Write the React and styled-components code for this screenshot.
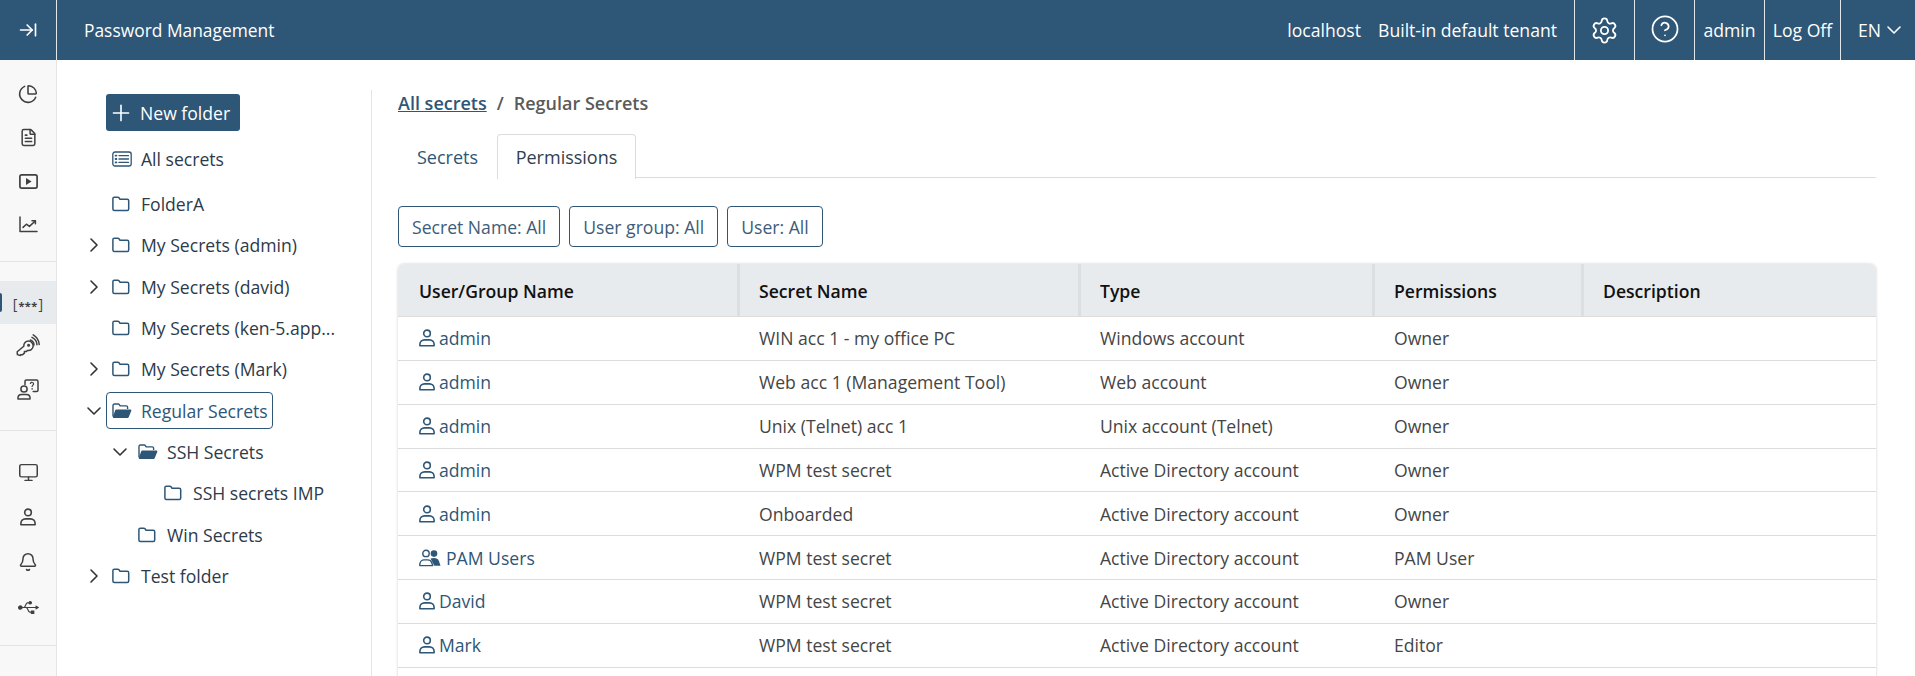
import React from "react";
import styled, { createGlobalStyle } from "styled-components";
import {
  ArrowRightToLine,
  Bell,
  ChartPie,
  ChevronDown,
  ChevronRight,
  CircleHelp,
  FileText,
  Monitor,
  Plus,
  Settings,
} from "lucide-react";
import { FaUsb } from "react-icons/fa";

const NAVY = "#2e5676";

const GlobalStyle = createGlobalStyle`
  html, body {
    margin: 0;
    height: 676px;
    overflow: hidden;
    background: #fff;
    font-family: "Open Sans", "Liberation Sans", sans-serif;
    font-size: 17.6px;
  }
`;

const Page = styled.div`
  height: 676px;
  display: flex;
  flex-direction: column;
  overflow: hidden;
`;

const Header = styled.header`
  height: 60px;
  flex: none;
  display: flex;
  align-items: stretch;
  background: ${NAVY};
  color: #fff;
`;

const HeaderCell = styled.div`
  display: flex;
  align-items: center;
  justify-content: center;
  flex: none;
  box-sizing: border-box;
  width: ${(p) => p.$w}px;
  border-left: 1px solid #dfe6ec;
`;

const Expander = styled(HeaderCell)`
  width: 56px;
  border-left: 0;
  border-right: 1px solid #dfe6ec;
  box-sizing: content-box;
`;

const AppTitle = styled.div`
  display: flex;
  align-items: center;
  padding-left: 27px;
  font-size: 17.4px;
`;

const Tenant = styled.div`
  margin-left: auto;
  display: flex;
  align-items: center;
  gap: 17px;
  padding-right: 17px;
`;

const LangCell = styled(HeaderCell)`
  justify-content: flex-start;
  padding-left: 17px;
  gap: 1px;
`;

const HelpGlyph = styled(CircleHelp)`
  margin-top: -3px;
`;

const Body = styled.div`
  flex: 1;
  min-height: 0;
  display: flex;
`;

const Rail = styled.nav`
  width: 56px;
  flex: none;
  background: #f8f8f8;
  border-right: 1px solid #e5e5e5;
`;

const RailGroup = styled.div`
  padding: ${(p) => p.$pad};
  border-bottom: 1px solid #e3e3e3;
`;

const RailItem = styled.div`
  height: ${(p) => p.$h || 43.7}px;
  display: flex;
  align-items: center;
  justify-content: center;
  position: relative;
  color: #404040;
  background: ${(p) => (p.$active ? "#e8ebee" : "transparent")};
  ${(p) =>
    p.$active &&
    `&::before {
      content: "";
      position: absolute;
      left: 0;
      top: 12px;
      bottom: 12px;
      width: 2px;
      border-radius: 0 2px 2px 0;
      background: ${NAVY};
    }`}
`;

const TreePanel = styled.aside`
  width: 315px;
  flex: none;
  box-sizing: border-box;
  margin-top: 30px;
  padding: 4px 0 0 30px;
  border-right: 1px solid #e5e5e5;
`;

const NewFolder = styled.button`
  display: flex;
  align-items: center;
  gap: 6px;
  height: 37px;
  width: 134px;
  margin-left: 19px;
  margin-bottom: 7px;
  padding: 0 0 0 2px;
  box-sizing: border-box;
  border: 0;
  border-radius: 3px;
  background: ${NAVY};
  color: #fff;
  font: inherit;
  white-space: nowrap;
`;

const TreeRow = styled.div`
  height: 41.35px;
  display: flex;
  align-items: center;
  padding-left: ${(p) => (p.$depth || 0) * 26}px;
  color: #2c3a4a;
  margin-bottom: ${(p) => p.$gap || 0}px;
`;

const Twisty = styled.span`
  width: 14px;
  height: 18px;
  flex: none;
  display: flex;
  align-items: center;
  justify-content: center;
  margin-right: 5px;
  color: #333;
  svg {
    flex: none;
  }
`;

const IconSlot = styled.span`
  width: 20px;
  flex: none;
  display: flex;
  align-items: center;
`;

const TreeLabel = styled.span`
  display: flex;
  align-items: center;
  gap: 9px;
  height: 37px;
  box-sizing: border-box;
  padding: 0 4px 0 5px;
  border: 1px solid ${(p) => (p.$selected ? NAVY : "transparent")};
  border-radius: 4px;
  color: ${(p) => (p.$selected ? NAVY : "inherit")};
  white-space: nowrap;
`;

const Content = styled.main`
  flex: 1;
  min-width: 0;
  padding: 30px 39px 0 26px;
`;

const Crumbs = styled.div`
  height: 27px;
  line-height: 27px;
  font-size: 18px;
  font-weight: 600;
  color: #5a5a5a;
`;

const CrumbLink = styled.a`
  color: ${NAVY};
  text-decoration: underline;
`;

const Sep = styled.span`
  margin: 0 10px;
`;

const Tabs = styled.div`
  height: 44px;
  margin-top: 17px;
  box-sizing: border-box;
  display: flex;
  align-items: stretch;
  border-bottom: 1px solid #dcdcdc;
`;

const Tab = styled.div`
  box-sizing: border-box;
  width: ${(p) => p.$w}px;
  height: 45px;
  display: flex;
  align-items: center;
  justify-content: center;
  font-size: 18px;
  color: ${(p) => (p.$active ? "#2f3f4f" : NAVY)};
  background: #fff;
  ${(p) =>
    p.$active &&
    `border: 1px solid #dcdcdc;
     border-bottom: 0;
     border-radius: 4px 4px 0 0;`}
`;

const Filters = styled.div`
  display: flex;
  gap: 9px;
  margin-top: 28px;
`;

const Filter = styled.button`
  height: 41px;
  padding: 0 13px;
  box-sizing: border-box;
  background: #fff;
  border: 1px solid ${NAVY};
  border-radius: 4px;
  color: #3d5c78;
  font: inherit;
`;

const Table = styled.div`
  margin-top: 17px;
  border-radius: 6px 6px 0 0;
  box-shadow: 0 0 3px rgba(0, 0, 0, 0.2);
`;

const Row = styled.div`
  display: grid;
  grid-template-columns: 339px 341px 294px 209px 1fr;
  height: ${(p) => (p.$head ? 53 : 43.85)}px;
  box-sizing: border-box;
  border-bottom: 1px solid #dcdcdc;
  background: ${(p) => (p.$head ? "#e8ebee" : "#fff")};
  border-radius: ${(p) => (p.$head ? "6px 6px 0 0" : "0")};
`;

const HeadCell = styled.div`
  display: flex;
  align-items: center;
  padding: 2px 0 0 ${(p) => (p.$first ? 21 : 19)}px;
  font-weight: 600;
  color: #111;
  border-left: ${(p) => (p.$first ? "0" : "3px solid #dcdfe2")};
  box-sizing: border-box;
`;

const Cell = styled.div`
  display: flex;
  align-items: center;
  padding-left: 22px;
  color: #454545;
`;

const UserCell = styled(Cell)`
  padding-left: 21px;
  gap: ${(p) => (p.$group ? 5 : 4)}px;
  color: ${NAVY};
`;

const Svg = ({ w = 18, h = 18, view = "0 0 24 24", children, ...rest }) => (
  <svg width={w} height={h} viewBox={view} fill="none" stroke="currentColor" strokeWidth="1.6" strokeLinecap="round" strokeLinejoin="round" {...rest}>
    {children}
  </svg>
);

const FolderIcon = () => (
  <svg width="18" height="16" viewBox="0 0 18 16" fill="none" stroke={NAVY} strokeWidth="1.5" strokeLinejoin="round">
    <path d="M.9 13V2.6c0-.8.6-1.4 1.4-1.4h3.6c.5 0 .8.2 1.1.6l1 1.4h7.2c.9 0 1.5.6 1.5 1.5V13c0 .9-.6 1.5-1.5 1.5H2.4c-.9 0-1.5-.6-1.5-1.5Z" />
  </svg>
);

const FolderOpenIcon = () => (
  <svg width="20" height="16" viewBox="0 0 20 16">
    <path d="M1 13.5V2.4C1 1.6 1.6 1 2.4 1h3.8c.4 0 .8.2 1 .5l1 1.4h6c.8 0 1.4.6 1.4 1.4V6" fill="none" stroke={NAVY} strokeWidth="1.4" />
    <path d="M4.2 6.4h14.2c.7 0 1.2.7.9 1.3l-2.6 6.5c-.2.5-.7.8-1.3.8H1.8c-.7 0-1.1-.7-.9-1.3l2.3-6.5c.2-.5.6-.8 1-.8Z" fill={NAVY} />
  </svg>
);

const ListIcon = () => (
  <svg width="20" height="16" viewBox="0 0 20 16" fill="none" stroke={NAVY} strokeWidth="1.3" strokeLinecap="round">
    <rect x="0.8" y="1" width="18.4" height="14" rx="2.2" />
    <path d="M7 4.6h9.5M7 8h9.5M7 11.4h9.5" />
    <path d="M3.6 4.6h.8M3.6 8h.8M3.6 11.4h.8" strokeWidth="1.8" />
  </svg>
);

const PersonIcon = ({ color = NAVY }) => (
  <svg width="16" height="18" viewBox="0 0 16 18" fill="none" stroke={color} strokeWidth="1.6">
    <circle cx="8" cy="4.4" r="3.3" />
    <path d="M.9 16.8v-1.4c0-2.6 2-4.5 4.6-4.5h5c2.6 0 4.6 1.9 4.6 4.5v1.4Z" strokeLinejoin="round" />
  </svg>
);

const GroupIcon = () => (
  <svg width="22" height="18" viewBox="0 0 22 18">
    <g fill="none" stroke={NAVY} strokeWidth="1.4">
      <circle cx="7" cy="4.4" r="3.2" />
      <path d="M.8 16.6v-1.2c0-2.6 2-4.5 4.5-4.5h3.4c2.2 0 3.4 1 4 2.6l1 3.1Z" strokeLinejoin="round" />
    </g>
    <circle cx="15" cy="4.6" r="3.3" fill={NAVY} />
    <path d="M11.5 9.6c3.6-1.2 7.5-.6 8.6 2.8l1.4 4.4h-6.2Z" fill={NAVY} />
  </svg>
);

const SecretsGlyph = styled.span`
  display: flex;
  align-items: center;
  gap: 1px;
  font: 500 14px/1 "Open Sans", sans-serif;
  color: #404040;
  padding-top: 2px;
`;

const Stars = styled.span`
  font-size: 11px;
  font-weight: 700;
  letter-spacing: 0.4px;
  padding-top: 4px;
`;

const PlayIcon = () => (
  <Svg w={19} h={15} view="0 0 19 15" strokeWidth="1.7">
    <rect x="0.9" y="0.9" width="17.2" height="13.2" rx="1.8" />
    <path d="M7 4v7l5.6-3.5Z" fill="currentColor" stroke="none" />
  </Svg>
);

const TrendIcon = () => (
  <Svg w={19} h={17} view="0 0 19 17" strokeWidth="1.5">
    <path d="M1 1v14.6h17" />
    <path d="M4 11.4l3.4-3.2 3 2.2 5.6-5.2" />
    <path d="M13 4.8h3.4v3" />
  </Svg>
);

const KeyIcon = () => (
  <Svg w={24} h={24} view="0 0 24 24" strokeWidth="1.5">
    <path d="M1.4 20.6l-.2-2.8 6.6-5.6a4.7 4.7 0 1 1 3.8 4.2l-1.4 1.2H8.4v1.6l-1.8 1.5H4.8l-.4.8Z" />
    <circle cx="12.6" cy="11.2" r=".8" fill="currentColor" />
    <path d="M14.4 6a5.4 5.4 0 0 1 3.6 5M16 3.4a8.6 8.6 0 0 1 5 7.4M17.2.8a12 12 0 0 1 6 9.6" />
  </Svg>
);

const UserHelpIcon = () => (
  <Svg w={22} h={21} view="0 0 22 21" strokeWidth="1.5">
    <circle cx="7" cy="10" r="3.1" />
    <path d="M1 20v-1.2c0-2 1.6-3.4 3.6-3.4h4.8c2 0 3.6 1.4 3.6 3.4V20Z" />
    <path d="M8 5.4V2.4C8 1.6 8.6 1 9.4 1h10.2c.8 0 1.4.6 1.4 1.4v8.8c0 .8-.6 1.4-1.4 1.4h-3.4" />
    <path d="M13.4 4.4c.6-1.4 3.2-1.2 3.2.5 0 1.1-1.5 1.3-1.5 2.5" strokeWidth="1.2" />
    <path d="M15.1 9.8v.1" />
  </Svg>
);

const treeRows = [
  { name: "FolderA" },
  { name: "My Secrets (admin)", twisty: "closed" },
  { name: "My Secrets (david)", twisty: "closed" },
  { name: "My Secrets (ken-5.app..." },
  { name: "My Secrets (Mark)", twisty: "closed" },
  { name: "Regular Secrets", twisty: "open", open: true, selected: true },
  { name: "SSH Secrets", twisty: "open", open: true, depth: 1 },
  { name: "SSH secrets IMP", depth: 2 },
  { name: "Win Secrets", depth: 1 },
  { name: "Test folder", twisty: "closed" },
];

const permissions = [
  ["admin", "WIN acc 1 - my office PC", "Windows account", "Owner"],
  ["admin", "Web acc 1 (Management Tool)", "Web account", "Owner"],
  ["admin", "Unix (Telnet) acc 1", "Unix account (Telnet)", "Owner"],
  ["admin", "WPM test secret", "Active Directory account", "Owner"],
  ["admin", "Onboarded", "Active Directory account", "Owner"],
  ["PAM Users", "WPM test secret", "Active Directory account", "PAM User", true],
  ["David", "WPM test secret", "Active Directory account", "Owner"],
  ["Mark", "WPM test secret", "Active Directory account", "Editor"],
];

const columns = ["User/Group Name", "Secret Name", "Type", "Permissions", "Description"];

export default function App() {
  return (
    <Page>
      <GlobalStyle />
      <Header>
        <Expander>
          <ArrowRightToLine size={20} strokeWidth={2} />
        </Expander>
        <AppTitle>Password Management</AppTitle>
        <Tenant>
          <span>localhost</span>
          <span>Built-in default tenant</span>
        </Tenant>
        <HeaderCell $w={60}>
          <Settings size={29} strokeWidth={1.5} />
        </HeaderCell>
        <HeaderCell $w={60}>
          <HelpGlyph size={30} strokeWidth={1.4} />
        </HeaderCell>
        <HeaderCell $w={70}>admin</HeaderCell>
        <HeaderCell $w={76}>Log Off</HeaderCell>
        <LangCell $w={75}>
          EN <ChevronDown size={24} strokeWidth={1.6} />
        </LangCell>
      </Header>
      <Body>
        <Rail>
          <RailGroup $pad="12px 0 14px">
            <RailItem><ChartPie size={20} strokeWidth={1.9} /></RailItem>
            <RailItem><FileText size={19} strokeWidth={1.9} /></RailItem>
            <RailItem><PlayIcon /></RailItem>
            <RailItem><TrendIcon /></RailItem>
          </RailGroup>
          <RailGroup $pad="19px 0 18px">
            <RailItem $active>
              <SecretsGlyph>[<Stars>***</Stars>]</SecretsGlyph>
            </RailItem>
            <RailItem><KeyIcon /></RailItem>
            <RailItem><UserHelpIcon /></RailItem>
          </RailGroup>
          <RailGroup $pad="19px 0 15px">
            <RailItem $h={45}><Monitor size={21} strokeWidth={1.7} /></RailItem>
            <RailItem $h={45}><PersonIcon color="#404040" /></RailItem>
            <RailItem $h={45}><Bell size={20} strokeWidth={1.8} /></RailItem>
            <RailItem $h={45}><FaUsb size={21} /></RailItem>
          </RailGroup>
        </Rail>
        <TreePanel>
          <NewFolder>
            <Plus size={26} strokeWidth={1.5} />
            New folder
          </NewFolder>
          <TreeRow $gap={4}>
            <Twisty />
            <TreeLabel><IconSlot><ListIcon /></IconSlot>All secrets</TreeLabel>
          </TreeRow>
          {treeRows.map((r) => (
            <TreeRow key={r.name} $depth={r.depth}>
              <Twisty>
                {r.twisty === "closed" && <ChevronRight size={24} strokeWidth={1.6} />}
                {r.twisty === "open" && <ChevronDown size={24} strokeWidth={1.6} />}
              </Twisty>
              <TreeLabel $selected={r.selected}>
                <IconSlot>{r.open ? <FolderOpenIcon /> : <FolderIcon />}</IconSlot>
                {r.name}
              </TreeLabel>
            </TreeRow>
          ))}
        </TreePanel>
        <Content>
          <Crumbs>
            <CrumbLink>All secrets</CrumbLink>
            <Sep>/</Sep>
            Regular Secrets
          </Crumbs>
          <Tabs>
            <Tab $w={99}>Secrets</Tab>
            <Tab $w={139} $active>Permissions</Tab>
          </Tabs>
          <Filters>
            <Filter>Secret Name: All</Filter>
            <Filter>User group: All</Filter>
            <Filter>User: All</Filter>
          </Filters>
          <Table>
            <Row $head>
              {columns.map((c, i) => (
                <HeadCell key={c} $first={i === 0}>{c}</HeadCell>
              ))}
            </Row>
            {permissions.map(([user, secret, type, perm, group], i) => (
              <Row key={i}>
                <UserCell $group={group}>
                  {group ? <GroupIcon /> : <PersonIcon />}
                  {user}
                </UserCell>
                <Cell>{secret}</Cell>
                <Cell>{type}</Cell>
                <Cell>{perm}</Cell>
                <Cell />
              </Row>
            ))}
            <Row />
          </Table>
        </Content>
      </Body>
    </Page>
  );
}
